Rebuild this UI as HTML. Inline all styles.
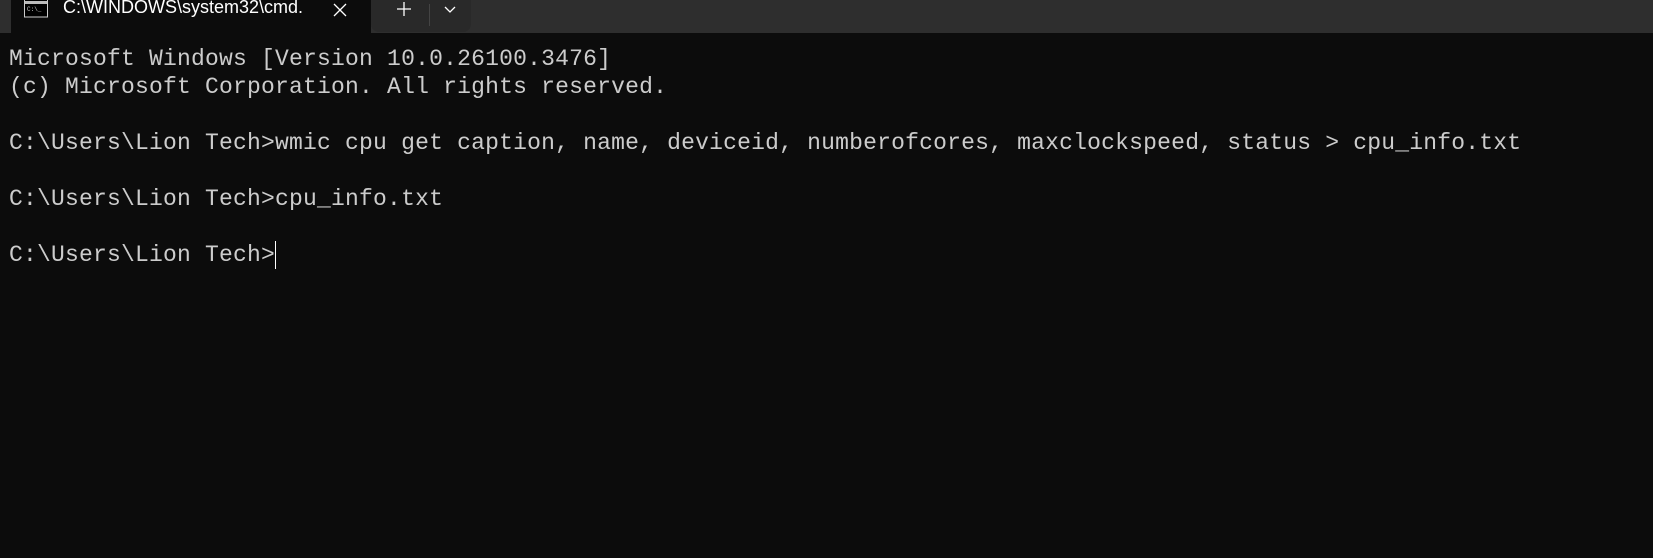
<!DOCTYPE html>
<html><head><style>
html,body{margin:0;padding:0;width:1653px;height:558px;overflow:hidden;background:#0c0c0c;}
.bar{position:absolute;left:0;top:0;width:1653px;height:33px;background:#2e2e2e;}
.tab{position:absolute;left:11px;top:0;width:360px;height:33px;background:#0c0c0c;}
.newt{position:absolute;left:371px;top:0;width:100px;height:32px;background:#292929;border-bottom-left-radius:8px;border-bottom-right-radius:8px;}
.title{position:absolute;left:63px;top:-3px;font:18px "Liberation Sans",sans-serif;color:#fff;}
.term{position:absolute;left:9px;top:45px;font:23px/28px "Liberation Mono",monospace;color:#cccccc;white-space:pre;letter-spacing:0.2px;}
.cur{position:absolute;left:275px;top:241px;width:1px;height:28px;background:#fff;}
</style></head><body>
<div class="bar"></div>
<div class="tab"></div>
<div class="newt"></div>
<svg style="position:absolute;left:24px;top:0" width="24" height="18"><rect x="0.5" y="-1" width="23" height="18" fill="#000" stroke="#ccc"/><rect x="1" y="1" width="22" height="3" fill="#bbb"/><text x="3" y="11" font-size="6" fill="#ccc" font-family="Liberation Mono">C:\_</text></svg>
<div class="title">C:\WINDOWS\system32\cmd.</div>
<svg style="position:absolute;left:333px;top:3px" width="14" height="14"><path d="M1 1L13 13M13 1L1 13" stroke="#fff" stroke-width="1.3"/></svg>
<svg style="position:absolute;left:397px;top:2px" width="14" height="14"><path d="M7 0V14M0 7H14" stroke="#fff" stroke-width="1.3"/></svg>
<div style="position:absolute;left:429px;top:4px;width:1px;height:22px;background:#444"></div>
<svg style="position:absolute;left:444px;top:6px" width="12" height="8"><path d="M1 1L6 6L11 1" stroke="#fff" fill="none" stroke-width="1.3"/></svg>
<div class="term">Microsoft Windows [Version 10.0.26100.3476]
(c) Microsoft Corporation. All rights reserved.

C:\Users\Lion Tech>wmic cpu get caption, name, deviceid, numberofcores, maxclockspeed, status > cpu_info.txt

C:\Users\Lion Tech>cpu_info.txt

C:\Users\Lion Tech></div>
<div class="cur"></div>
</body></html>
